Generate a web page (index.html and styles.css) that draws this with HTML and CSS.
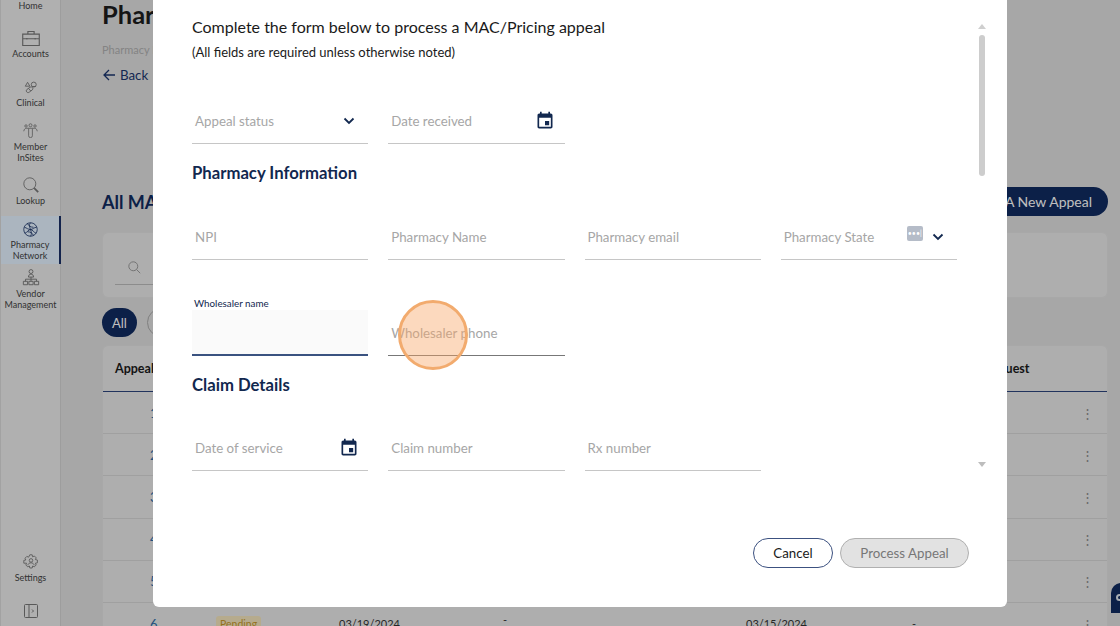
FILE: index.html
```html
<!DOCTYPE html>
<html lang="en">
<head>
<meta charset="utf-8">
<title>MAC/Pricing appeal</title>
<link rel="stylesheet" href="styles.css">
</head>
<body>
<div class="app">
  <aside class="sidebar">
    <nav class="nav">
      <a class="nav-item nav-home"><span>Home</span></a>
      <a class="nav-item nav-accounts">
        <svg class="nav-icon" viewBox="1.500 3 17 14.500"><path d="M2 6h16v11H2zM7 6V3.500h6V6M2 10.500h16M6 9.800v1.500M14 9.800v1.500"/></svg>
        <span>Accounts</span>
      </a>
      <a class="nav-item nav-clinical">
        <svg class="nav-icon" viewBox="0 0 20 20"><path d="M2 8l3.500-6L9 8zM13 8.500h5"/><circle cx="15" cy="5.500" r="3.800"/><path d="M5 17.500a2.700 2.700 0 0 1-.5-4.500l5-3.500a2.700 2.700 0 0 1 3.500 4l-5 3.700a2.700 2.700 0 0 1-3 .3zM7 11.500l3.500 4"/></svg>
        <span>Clinical</span>
      </a>
      <a class="nav-item nav-member">
        <svg class="nav-icon" viewBox="0 0 20 20"><circle cx="10" cy="3" r="2"/><circle cx="4" cy="4" r="1.600"/><circle cx="16" cy="4" r="1.600"/><path d="M1 11c.5-3 2-4 4-4h10c2 0 3.500 1 4 4M7.500 7.500V17a2.500 2.500 0 0 0 5 0V7.500"/></svg>
        <span>Member<br>InSites</span>
      </a>
      <a class="nav-item nav-lookup">
        <svg class="nav-icon" viewBox="0 0 20 20"><circle cx="8.500" cy="8.500" r="7.500"/><path d="M14 14l5 5" class="thick"/></svg>
        <span>Lookup</span>
      </a>
      <a class="nav-item nav-pharmacy">
        <svg class="nav-icon" viewBox="0 0 20 20"><circle cx="10" cy="10" r="9"/><path d="M2 7c3 1 5 3 8 3s5-3 8-3M2.500 15c3-1 5-5 7.500-5s4.500 4 7.500 5M10 1c-2.500 3-1 6 0 9s2 6 0 9M6 2c1 3 4 5 8 5M14 18c-1-3-4-5-8-5"/></svg>
        <span>Pharmacy<br>Network</span>
      </a>
      <a class="nav-item nav-vendor">
        <svg class="nav-icon" viewBox="0 0 20 20"><circle cx="10" cy="3" r="2.300"/><path d="M7 9.500c0-2 1.200-3.500 3-3.500s3 1.500 3 3.500zM10 9.500V12M3.500 14.500V12h13v2.500M10 12v2.500M1 14.500h5v4H1zM7.500 14.500h5v4h-5zM14 14.500h5v4h-5z"/></svg>
        <span>Vendor<br>Management</span>
      </a>
    </nav>
    <div class="nav-bottom">
      <a class="nav-item nav-settings">
        <svg class="nav-icon" viewBox="0 0 20 20"><path d="M8.500 1h3l.5 2.500 2.200-1 2.300 2.300-1 2.200 2.500.5v3.500l-2.500.5 1 2.200-2.300 2.300-2.200-1-.5 2.500h-3l-.5-2.500-2.200 1-2.300-2.300 1-2.200L1 11.500V8l2.500-.5-1-2.200 2.300-2.300 2.200 1z"/><circle cx="10" cy="8" r="2.200"/><path d="M6 14c.5-2 2-3 4-3s3.500 1 4 3"/></svg>
        <span>Settings</span>
      </a>
      <svg class="collapse-icon" viewBox="0 0 14 14"><rect x=".5" y=".5" width="13" height="13" rx="1"/><path d="M5 .5v13M8 5.500L9.500 7 8 8.500"/></svg>
    </div>
  </aside>

  <main class="main">
    <h1 class="page-title">Pharmacy Network</h1>
    <p class="crumb">Pharmacy Network</p>
    <a class="back"><svg class="back-arrow" viewBox="0 0 14 14"><path d="M13 7H2M7 2L2 7l5 5"/></svg>Back</a>
    <div class="list-head">
      <h2 class="list-title">All MAC/Pricing Appeals</h2>
      <button class="add-btn">Add A New Appeal</button>
    </div>
    <div class="search-card">
      <div class="search-box">
        <svg class="search-icon" viewBox="0 0 16 16"><circle cx="6.500" cy="6.500" r="5.500"/><path d="M10.500 10.500L15 15"/></svg>
      </div>
    </div>
    <div class="filters">
      <span class="pill pill-on">All</span>
      <span class="pill">Pending</span>
    </div>
    <div class="table-card">
      <div class="t-row t-head"><span class="c-id">Appeal</span><span></span><span></span><span></span><span></span><span class="c-req">Date of Request</span><span></span></div>
      <div class="t-row"><span class="link">1</span><span></span><span></span><span></span><span></span><span></span><span class="kebab">⋮</span></div>
      <div class="t-row"><span class="link">2</span><span></span><span></span><span></span><span></span><span></span><span class="kebab">⋮</span></div>
      <div class="t-row"><span class="link">3</span><span></span><span></span><span></span><span></span><span></span><span class="kebab">⋮</span></div>
      <div class="t-row"><span class="link">4</span><span></span><span></span><span></span><span></span><span></span><span class="kebab">⋮</span></div>
      <div class="t-row"><span class="link">5</span><span></span><span></span><span></span><span></span><span></span><span class="kebab">⋮</span></div>
      <div class="t-row"><span class="link">6</span><span><em class="badge">Pending</em></span><span>03/19/2024</span><span class="dash">-</span><span>03/15/2024</span><span>-</span><span class="kebab">⋮</span></div>
    </div>
  </main>
</div>

<div class="chat-tab"><span class="chat-eye"></span></div>
<div class="scrim"></div>

<section class="modal">
  <div class="modal-scroll">
    <h2 class="modal-title">Complete the form below to process a MAC/Pricing appeal</h2>
    <p class="modal-note">(All fields are required unless otherwise noted)</p>

    <div class="form-row row-status">
      <div class="field"><span class="ph">Appeal status</span>
        <svg class="chev" viewBox="0 0 12 8"><path d="M1.500 1.500L6 6l4.500-4.500"/></svg></div>
      <div class="field"><span class="ph">Date received</span>
        <svg class="cal" viewBox="0 0 24 24"><path d="M17 12h-5v5h5v-5zM16 1v2H8V1H6v2H5c-1.110 0-1.990.9-1.990 2L3 19c0 1.100.89 2 2 2h14c1.100 0 2-.9 2-2V5c0-1.100-.9-2-2-2h-1V1h-2zm3 18H5V8h14v11z"/></svg></div>
    </div>

    <h3 class="section-title sec-pharmacy">Pharmacy Information</h3>
    <div class="form-row row-pharmacy">
      <div class="field"><span class="ph">NPI</span></div>
      <div class="field"><span class="ph">Pharmacy Name</span></div>
      <div class="field"><span class="ph">Pharmacy email</span></div>
      <div class="field"><span class="ph">Pharmacy State</span>
        <span class="pm-badge">•••|</span>
        <svg class="chev chev-state" viewBox="0 0 12 8"><path d="M1.500 1.500L6 6l4.500-4.500"/></svg></div>
    </div>

    <div class="form-row row-wholesaler">
      <div class="field field-active"><label class="float-label">Wholesaler name</label></div>
      <div class="field field-hover"><span class="ph">Wholesaler phone</span></div>
    </div>

    <h3 class="section-title sec-claim">Claim Details</h3>
    <div class="form-row row-claim">
      <div class="field"><span class="ph">Date of service</span>
        <svg class="cal" viewBox="0 0 24 24"><path d="M17 12h-5v5h5v-5zM16 1v2H8V1H6v2H5c-1.110 0-1.990.9-1.990 2L3 19c0 1.100.89 2 2 2h14c1.100 0 2-.9 2-2V5c0-1.100-.9-2-2-2h-1V1h-2zm3 18H5V8h14v11z"/></svg></div>
      <div class="field"><span class="ph">Claim number</span></div>
      <div class="field"><span class="ph">Rx number</span></div>
    </div>
  </div>

  <div class="scrollbar">
    <span class="arrow-up"></span>
    <span class="thumb"></span>
    <span class="arrow-down"></span>
  </div>

  <div class="modal-actions">
    <button class="btn btn-cancel">Cancel</button>
    <button class="btn btn-process">Process Appeal</button>
  </div>
</section>

<div class="spotlight"></div>
</body>
</html>
```

FILE: styles.css
```css
* { box-sizing: border-box; }
html, body { margin: 0; height: 626px; overflow: hidden; }
body { font-family: Lato, "Open Sans", sans-serif; color: #1a1a1a; background: #dfdfdf; position: relative; }
h1, h2, h3, p { margin: 0; }

.app { display: flex; height: 626px; overflow: hidden; }

/* Sidebar */
.sidebar { width: 61px; flex: none; height: 626px; background: #ebebeb; border-left: 1px solid #d8d8d8; border-right: 1px solid #d2d2d2; display: flex; flex-direction: column; justify-content: space-between; }
.nav { display: flex; flex-direction: column; }
.nav-item { display: flex; flex-direction: column; align-items: center; text-align: center; font-size: 9px; line-height: 11px; color: #444; }
.nav-icon { fill: none; stroke: #777; stroke-width: 1.100; }
.nav-icon .thick { stroke-width: 2.200; }
.nav-home { height: 20px; }
.nav-accounts { height: 49px; padding-top: 11px; gap: 1.500px; }
.nav-accounts .nav-icon { width: 18px; height: 15px; }
.nav-clinical { height: 49px; padding-top: 12px; gap: 2.500px; }
.nav-clinical .nav-icon { width: 13px; height: 13px; stroke-width: 1.400; }
.nav-member { height: 49px; padding-top: 5px; gap: 2.500px; }
.nav-member .nav-icon { width: 15px; height: 15px; }
.nav-lookup { height: 49px; padding-top: 10px; gap: 1.500px; }
.nav-lookup .nav-icon { width: 16px; height: 16px; }
.nav-pharmacy { height: 48px; margin-right: -1px; padding-top: 6px; gap: 1.500px; background: #e5f2ff; border-right: 2px solid #1a2f66; }
.nav-pharmacy .nav-icon { width: 15px; height: 15px; stroke: #1b3468; }
.nav-vendor { height: 48px; padding-top: 5px; gap: 2px; }
.nav-vendor .nav-icon { width: 18px; height: 17px; }
.nav-bottom { display: flex; flex-direction: column; align-items: center; }
.nav-settings { gap: 2px; }
.nav-settings .nav-icon { width: 16px; height: 16px; }
.collapse-icon { width: 14px; height: 14px; margin: 21px 0 8px; fill: none; stroke: #777; stroke-width: 1; }

/* Page under the dialog */
.main { flex: 1; min-width: 0; padding: 0 12px 0 41px; }
.page-title { font-size: 25.500px; line-height: 30px; font-weight: 700; color: #1c1c1c; margin-top: -1px; white-space: nowrap; }
.crumb { font-size: 11px; line-height: 14px; color: #b0b0b0; margin-top: 14px; }
.back { display: flex; align-items: center; gap: 4px; font-size: 13.300px; line-height: 18px; color: #1a356e; margin-top: 9px; }
.back-arrow { width: 14px; height: 14px; fill: none; stroke: #1a356e; stroke-width: 1.300; }
.list-head { display: flex; justify-content: space-between; align-items: center; margin-top: 103px; height: 29px; }
.list-title { font-size: 18px; font-weight: 700; color: #102b60; white-space: nowrap; }
.add-btn { height: 29px; width: 160px; border: 0; border-radius: 15px; background: #102b60; color: #fff; font: 14px Lato, sans-serif; text-align: right; padding: 0 16px 0 0; }
.search-card { height: 66px; margin-top: 16px; background: #e8e8e8; border: 1px solid #e0e0e0; border-radius: 6px; padding-left: 12px; display: flex; }
.search-box { width: 60px; height: 52px; border-bottom: 1px solid #bbb; display: flex; align-items: center; padding-left: 13px; padding-top: 18px; }
.search-icon { width: 13px; height: 13px; fill: none; stroke: #999; stroke-width: 1.200; }
.filters { display: flex; gap: 10px; margin-top: 10px; height: 29px; }
.pill { display: flex; align-items: center; padding: 0 10px; border: 1px solid #aaa; border-radius: 15px; font-size: 13px; color: #444; }
.pill-on { width: 35px; justify-content: center; padding: 0; border: 0; background: #102b60; color: #fff; }
.table-card { margin-top: 8px; background: #e8e8e8; border: 1px solid #e0e0e0; border-radius: 6px 6px 0 0; }
.t-row { display: grid; grid-template-columns: 113px 123px 164px 243px 166px 154px 43px; height: 42.200px; align-items: center; border-bottom: 1px solid #d6d6d6; font-size: 11px; color: #333; }
.t-head { height: 46px; border-bottom: 1px solid #2c457c; font-weight: 700; font-size: 12.500px; color: #1a1a1a; }
.c-id { padding-left: 12px; white-space: nowrap; }
.link { padding-left: 47px; color: #2f6da8; font-size: 13px; }
.c-req { margin-left: 28px; white-space: nowrap; }
.kebab { color: #8c8c8c; font-size: 13px; text-align: center; }
.badge { display: inline-block; padding: 0 4px; border-radius: 3px; background: #f3e5bc; color: #c7972a; font-style: normal; font-size: 10.500px; line-height: 16px; }
.dash { position: relative; top: -4px; }

.chat-tab { position: absolute; left: 1111px; top: 583px; width: 14px; height: 30px; background: #102b60; border-radius: 10px 0 0 0; }
.chat-eye { position: absolute; left: 5px; top: 11px; width: 7px; height: 7px; border: 2px solid #dfe7f0; border-radius: 50%; }

.scrim { position: absolute; inset: 0; background: rgba(0, 0, 0, .25); }

/* Dialog */
.modal { position: absolute; left: 153px; top: -20px; width: 854px; height: 627px; background: #fff; border-radius: 6px; padding: 0 0 0 39px; }
.modal-scroll { padding-top: 35px; width: 765px; }
.modal-title { font-size: 16px; font-weight: 400; line-height: 24px; color: #1a1a1a; }
.modal-note { font-size: 13px; line-height: 18px; color: #1a1a1a; margin-top: 4px; }
.form-row { display: grid; grid-template-columns: repeat(4, 1fr); gap: 20px; }
.field { height: 46px; border-bottom: 1px solid #c6c6c6; display: flex; align-items: center; padding: 0 3px; position: relative; }
.ph { font-size: 13.300px; color: #a6a6a6; white-space: nowrap; }
.row-status { margin-top: 37px; }
.section-title { font-size: 16.700px; line-height: 22px; font-weight: 700; color: #12284f; }
.sec-pharmacy { margin-top: 18px; }
.row-pharmacy { margin-top: 30px; }
.row-wholesaler { margin-top: 50px; }
.sec-claim { margin-top: 18px; }
.row-claim { margin-top: 29px; }
.chev { position: absolute; left: 151px; top: 19px; width: 12px; height: 8px; fill: none; stroke: #12284f; stroke-width: 1.800; }
.cal { position: absolute; left: 147px; top: 13px; width: 20px; height: 20px; fill: #12284f; }
.pm-badge { position: absolute; left: 126px; top: 12px; width: 16px; height: 15px; border-radius: 2px; background: #b5bcc8; color: #fff; font-size: 7px; line-height: 15px; text-align: center; }
.field-active { background: #fafafa; border-bottom: 2px solid #3a5280; padding: 0; }
.field-hover { border-bottom-color: #777; }
.float-label { position: absolute; left: 2px; top: -13px; font-size: 9.800px; line-height: 13px; color: #12284f; white-space: nowrap; }

.scrollbar { position: absolute; left: 826px; top: 44px; width: 6px; height: 447px; }
.arrow-up, .arrow-down { position: absolute; left: -1px; width: 0; height: 0; border-left: 4px solid transparent; border-right: 4px solid transparent; }
.arrow-up { top: 0; border-bottom: 5px solid #cfcfcf; }
.arrow-down { bottom: 4px; border-top: 5px solid #bdbdbd; }
.thumb { position: absolute; left: 0; top: 11px; width: 6px; height: 141px; background: #cdcdcd; border-radius: 3px; }

.modal-actions { position: absolute; left: 600px; top: 558px; display: flex; gap: 7px; }
.btn { height: 30px; border-radius: 15px; font: 13.300px Lato, sans-serif; }
.btn-cancel { width: 80px; background: #fff; border: 1px solid #3c5180; color: #1a1a1a; }
.btn-process { width: 129px; background: #e2e2e2; border: 1px solid #b0b0b0; color: #777; }

.spotlight { position: absolute; left: 398px; top: 300px; width: 70px; height: 70px; border-radius: 50%; border: 3px solid #f2ab6e; background: rgba(247, 165, 100, .42); }
```
